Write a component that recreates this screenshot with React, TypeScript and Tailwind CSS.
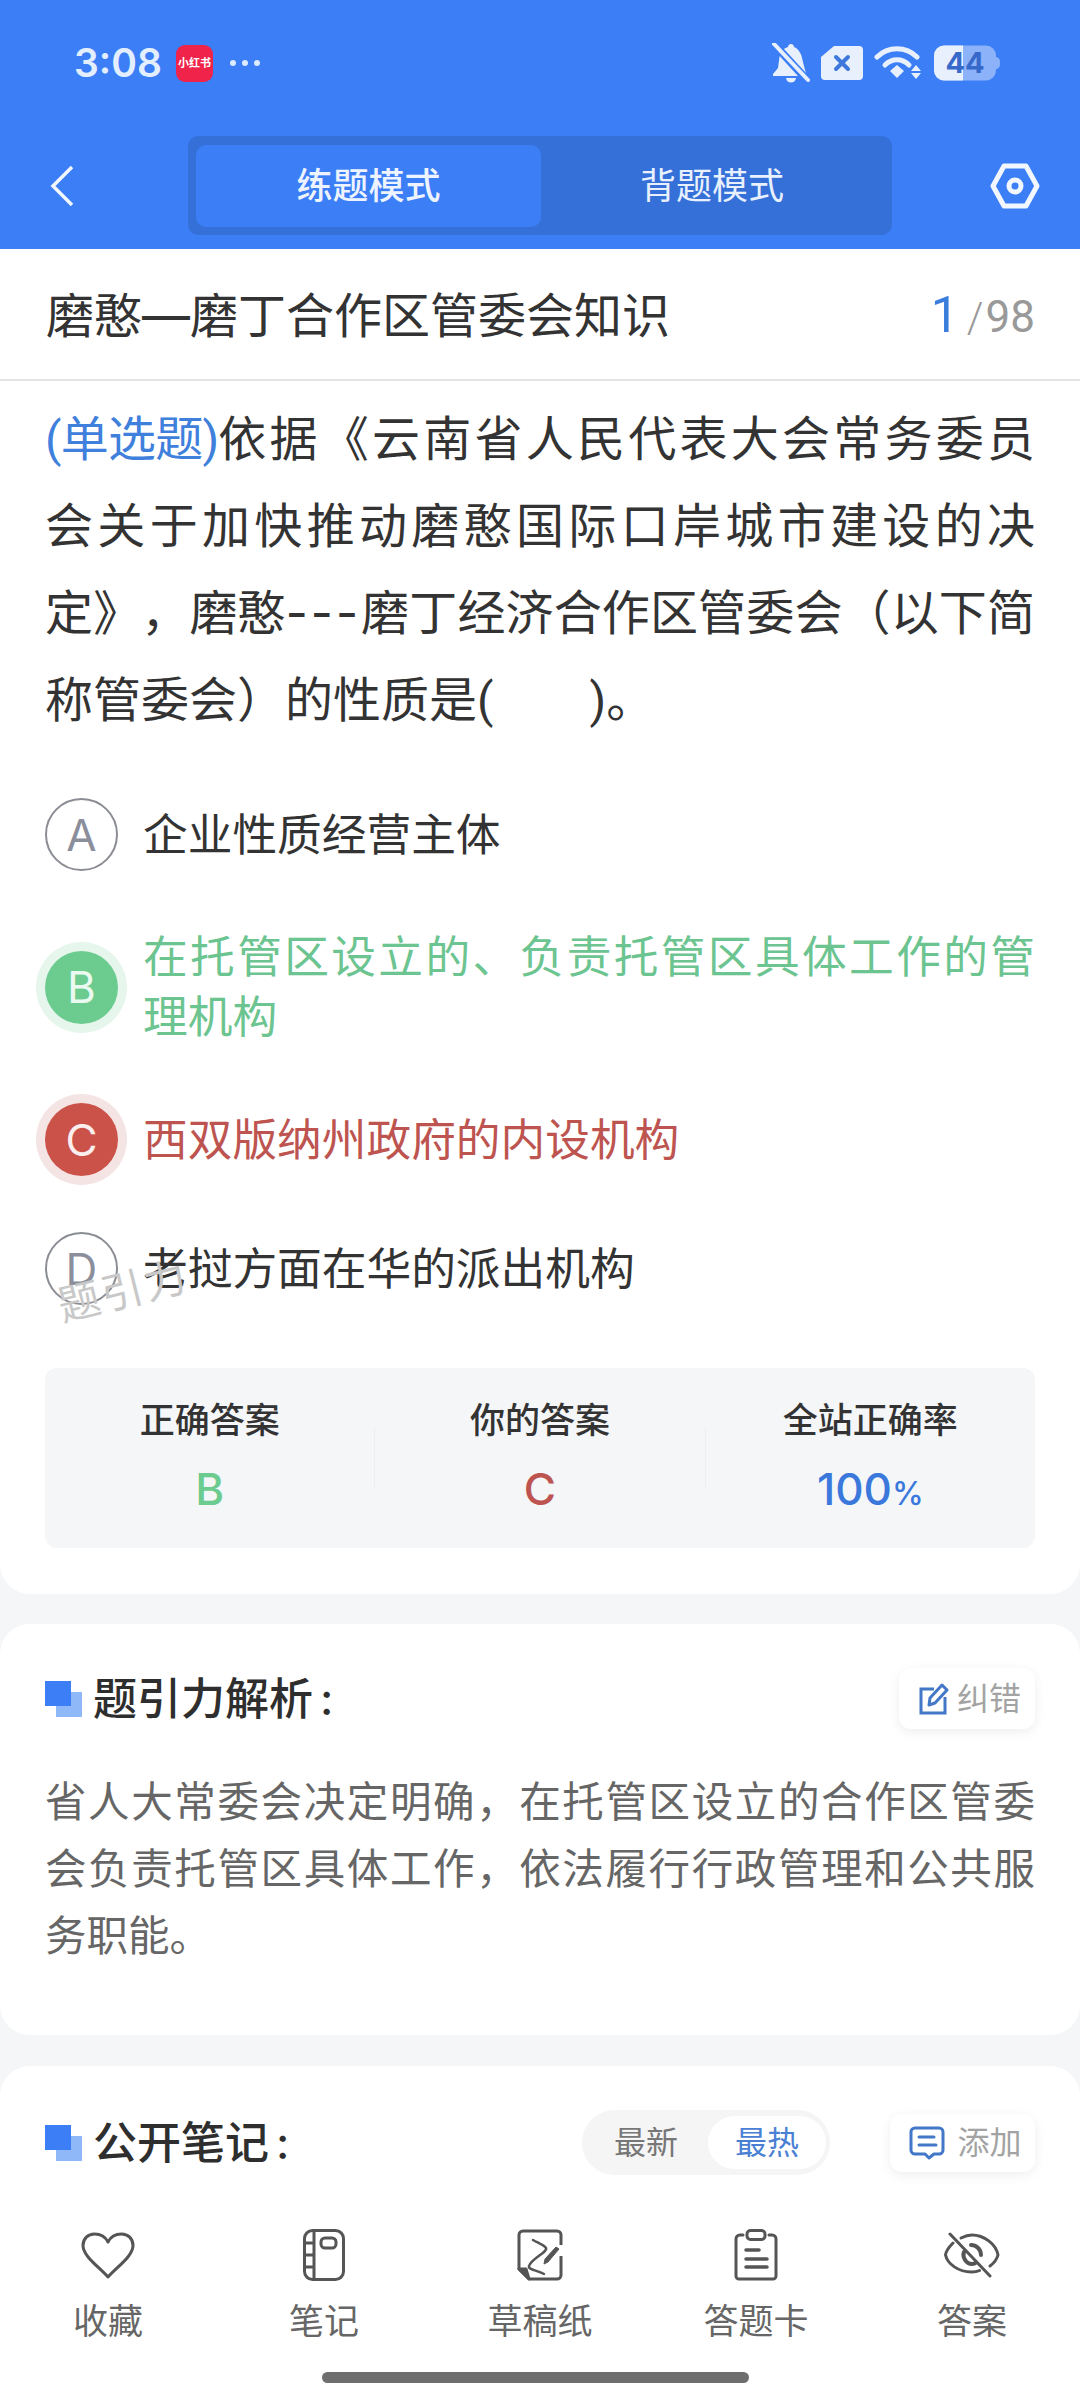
import type { ReactNode } from 'react';

const BellOff = () => (
  <svg width="38" height="40" viewBox="0 0 38 40" fill="#e8f0fe">
    <path d="M19 1c-2 0-3 1.500-3 3-5 1.500-8 5-8.500 10L6 25l-5 6v2h34l-2-6-3-12c-1-6-5-10-8-11 0-1.500-1-3-3-3z" />
    <path d="M14 35h10c-.5 3-2.500 4.500-5 4.500S14.500 38 14 35z" />
    <path d="M1 0l35 38" stroke="#3b7ef6" strokeWidth="8" />
    <path d="M2 1l34 36" stroke="#e8f0fe" strokeWidth="4" strokeLinecap="round" />
  </svg>
);

const SimOff = () => (
  <svg width="44" height="36" viewBox="0 0 44 36">
    <path d="M14 1h25a4 4 0 0 1 4 4v26a4 4 0 0 1-4 4H5a4 4 0 0 1-4-4V12z" fill="#e8f0fe" />
    <path d="M16 12l12 12M28 12L16 24" stroke="#3f78dc" strokeWidth="4" strokeLinecap="round" />
  </svg>
);

const Wifi = () => (
  <svg width="50" height="36" viewBox="0 0 50 36" fill="none" stroke="#e8f0fe" strokeLinecap="round">
    <path d="M3 12C14 1 32 1 43 12" strokeWidth="5" />
    <path d="M11 20c7-7 17-7 24 0" strokeWidth="5" />
    <path d="M16 26l7-6 7 6-7 7z" fill="#e8f0fe" stroke="none" />
    <path d="M42 20l5 6H37zM37 28h10l-5 6z" fill="#e8f0fe" stroke="none" />
  </svg>
);

const Battery = () => (
  <svg width="66" height="36" viewBox="0 0 66 36">
    <rect x="0" y="0.500" width="62" height="35" rx="10" fill="#8cb2f9" />
    <path d="M10 .5h19v35H10A10 10 0 0 1 0 25.500v-15A10 10 0 0 1 10 .5z" fill="#e8f0fe" />
    <path d="M62 12c3 .5 4 2 4 6s-1 5.500-4 6z" fill="#8cb2f9" />
    <text x="31" y="28" textAnchor="middle" fontSize="29" fontWeight="700" fontFamily="Inter" fill="#3669c9">44</text>
  </svg>
);

const Heart = () => (
  <svg width="54" height="47" viewBox="0 0 54 47" fill="none" stroke="#555" strokeWidth="3" strokeLinejoin="round">
    <path d="M27 45C17 34 2 24 2 13.500 2 6.500 7 2 13.500 2 19.500 2 24.500 5 27 10 29.500 5 34.500 2 40.500 2 47 2 52 6.500 52 13.500 52 24 37 34 27 45z" />
  </svg>
);

const Notebook = () => (
  <svg width="42" height="52" viewBox="0 0 42 52" fill="none" stroke="#555" strokeWidth="3">
    <rect x="1.500" y="1.500" width="39" height="49" rx="8" />
    <path d="M11 2v48M2 14h9M2 26h9M2 38h9" />
    <rect x="18" y="9" width="15" height="10" rx="4" />
  </svg>
);

const Draft = () => (
  <svg width="46" height="52" viewBox="0 0 46 52" fill="none" stroke="#555" strokeWidth="3" strokeLinejoin="round">
    <path d="M44 16V6a4 4 0 0 0-4-4H6a4 4 0 0 0-4 4v34l10 10h28a4 4 0 0 0 4-4V27" />
    <path d="M2 40h7l3 10z" fill="#555" />
    <path d="M16 11c5 3 11 5 13 8 2 4-15 11-17 18-1 4 8 4 15 8" strokeWidth="2.500" strokeLinecap="round" />
    <path d="M42 20L31 33l-4 2 1-5 11-12z" fill="#555" strokeWidth="1" />
  </svg>
);

const Clipboard = () => (
  <svg width="44" height="52" viewBox="0 0 44 52" fill="none" stroke="#555" strokeWidth="3" strokeLinecap="round">
    <path d="M9 6H6a4 4 0 0 0-4 4v37a3 3 0 0 0 3 3h34a3 3 0 0 0 3-3V10a4 4 0 0 0-4-4h-3" />
    <rect x="13" y="1.500" width="18" height="9" rx="3.500" />
    <path d="M12 21h13M12 30h21M12 38h21" strokeWidth="3.500" />
  </svg>
);

const EyeOff = () => (
  <svg width="56" height="46" viewBox="0 0 56 46" fill="none" stroke="#555" strokeWidth="3" strokeLinecap="round">
    <path d="M6 2l40 42" />
    <path d="M9 11C5 15 2 19 1.500 23c2 9 13 17 26 17 3 0 6-.5 8-1.500" />
    <path d="M17 6c3-1.500 7-3 11-3 12 0 24 9 26 20-1 4-4 8-8 11" />
    <path d="M20 20c-2 5 2 12 8 12 2 0 3-.5 4-1.500" strokeWidth="4" />
    <path d="M27 13c5 0 10 4 10 10" strokeWidth="4" />
  </svg>
);

const Edit = () => (
  <svg width="30" height="32" viewBox="0 0 30 32" fill="none" stroke="#4378c8" strokeWidth="3">
    <path d="M15 6H2v24h24V14" />
    <path d="M10 22l1-7L23 2l5 5-12 13z" strokeLinejoin="round" />
  </svg>
);

const Comment = () => (
  <svg width="36" height="34" viewBox="0 0 36 34" fill="none" stroke="#4378c8" strokeWidth="3" strokeLinejoin="round">
    <path d="M6 2h24a4 4 0 0 1 4 4v18a4 4 0 0 1-4 4h-5l-5 4-4-4H6a4 4 0 0 1-4-4V6a4 4 0 0 1 4-4z" />
    <path d="M10 11h15M10 19h17" strokeLinecap="round" />
  </svg>
);

// two overlapping squares in front of the section headings
const HeadingMark = () => (
  <div className="relative h-9 w-[37px] shrink-0">
    <div className="absolute bottom-0 right-0 h-[25px] w-[26px] bg-[#8fb8f8]" />
    <div className="absolute left-0 top-0 h-[25px] w-[26px] bg-[#3b7ef6]" />
  </div>
);

function Option({ letter, tone, children, mark }: { letter: string; tone?: 'right' | 'wrong'; children: ReactNode; mark?: ReactNode }) {
  const circle =
    tone === 'right'
      ? 'bg-[#6ccb8f] text-[#eafaf0] ring-[9px] ring-[#e6f6ec]'
      : tone === 'wrong'
        ? 'bg-[#cb5249] text-[#fbeeee] ring-[9px] ring-[#f5e4e4]'
        : 'border-2 border-[#8b8d94] text-[#8b8e9b]';
  const text = tone === 'right' ? 'text-[#6cc490]' : tone === 'wrong' ? 'text-[#bd5450]' : 'text-[#333]';
  return (
    <div className="relative flex items-center">
      <div className={`flex h-[73px] w-[73px] shrink-0 items-center justify-center rounded-full text-[44px] leading-none ${circle}`}>{letter}</div>
      <div className={`ml-[25px] flex-1 text-justify text-[44.700px] leading-[60px] ${text}`}>{children}</div>
      {mark}
    </div>
  );
}

function Stat({ label, children }: { label: string; children: ReactNode }) {
  return (
    <div className="flex flex-1 flex-col items-center">
      <div className="text-[35px] font-medium leading-[50px] text-[#333]">{label}</div>
      <div className="mt-[19px] h-[50px] text-[44px] font-medium leading-[50px]">{children}</div>
    </div>
  );
}

const tabs = [
  { label: '收藏', icon: <Heart /> },
  { label: '笔记', icon: <Notebook /> },
  { label: '草稿纸', icon: <Draft /> },
  { label: '答题卡', icon: <Clipboard /> },
  { label: '答案', icon: <EyeOff /> },
];

export default function App() {
  return (
    <div className="relative h-[2400px] w-[1080px] overflow-hidden bg-[#f4f6f8] font-['Inter','Noto_Sans_CJK_SC',sans-serif] [text-spacing-trim:space-all]">
      {/* Blue header */}
      <header className="bg-[#3b7ef6]">
        <div className="flex h-[124px] items-center justify-between pl-[74px] pr-[80px] pt-[2px]">
          <div className="flex items-center">
            <span className="w-[102px] text-[39px] font-semibold text-[#e3eefe]">3:08</span>
            <span className="flex h-[37px] w-[37px] items-center justify-center rounded-[9px] bg-[#f0234a] text-[11px] font-bold text-white">小红书</span>
            <span className="ml-[17px] flex gap-[6px]">
              <i className="h-[6px] w-[6px] rounded-full bg-[#dcebff]" />
              <i className="h-[6px] w-[6px] rounded-full bg-[#dcebff]" />
              <i className="h-[6px] w-[6px] rounded-full bg-[#dcebff]" />
            </span>
          </div>
          <div className="flex items-center gap-[10px]">
            <BellOff />
            <SimOff />
            <Wifi />
            <Battery />
          </div>
        </div>
        <div className="flex h-[125px] items-start justify-between px-[40px] pt-[12px]">
          <div className="flex h-[99px] w-[60px] items-center pl-[10px]">
            <svg width="24" height="42" viewBox="0 0 24 42" fill="none" stroke="#f2f7ff" strokeWidth="3.500">
              <path d="M22 2L3 21l19 19" />
            </svg>
          </div>
          <div className="ml-[88px] flex h-[99px] w-[704px] rounded-[10px] bg-[#3570d8] pl-[8px] pt-[9px]">
            <div className="flex h-[82px] w-[345px] items-center justify-center rounded-[10px] bg-[#3b7ef6] text-[36px] font-medium text-[#eef4ff]">练题模式</div>
            <div className="flex h-[82px] flex-1 items-center justify-center pr-[9px] text-[36px] text-[#e8f0fe]">背题模式</div>
          </div>
          <div className="flex h-[99px] flex-1 items-center justify-end">
            <svg width="50" height="46" viewBox="0 0 50 46" fill="none" stroke="#f2f7ff" strokeWidth="5" strokeLinejoin="round">
              <path d="M14 3h22l11 20-11 20H14L3 23z" />
              <circle cx="25" cy="23" r="6" />
            </svg>
          </div>
        </div>
      </header>

      {/* Question card */}
      <section className="rounded-b-[30px] bg-white pb-[46px]">
        <div className="flex h-[132px] items-center justify-between border-b-2 border-[#e4e4e4] pl-[46px] pr-[45px] pt-[3px]">
          <h1 className="text-[48px] text-[#333]">磨憨—磨丁合作区管委会知识</h1>
          <div className="flex items-baseline font-['Roboto','Noto_Sans_CJK_SC',sans-serif] text-[#999]">
            <span className="text-[50px] text-[#3b7ddd]">1</span>
            <span className="ml-[8px] text-[42px] font-light">/</span>
            <span className="ml-[2px] text-[44px]">98</span>
          </div>
        </div>
        <div className="px-[45px] pt-[16px]">
          <p className="text-justify font-['Roboto','Noto_Sans_CJK_SC',sans-serif] text-[48px] leading-[86.500px] text-[#333]">
            <span className="block [text-align-last:justify]"><span className="tracking-[-4px] text-[#3f80dc]">(单选题)</span>依据《云南省人民代表大会常务委员</span>
            会关于加快推动磨憨国际口岸城市建设的决定》，磨憨<span className="font-['Inter'] tracking-[3px]">---</span>磨丁经济合作区管委会（以下简称管委会）的性质是(　　)。
          </p>
          <div className="mt-[54px] flex flex-col gap-[56px]">
            <Option letter="A">企业性质经营主体</Option>
            <Option letter="B" tone="right">在托管区设立的、负责托管区具体工作的管理机构</Option>
            <Option letter="C" tone="wrong">西双版纳州政府的内设机构</Option>
            <Option
              letter="D"
              mark={<span className="absolute left-[12px] top-[38px] -rotate-[14deg] text-[42px] leading-none tracking-[2px] text-[#c8c8c8]">题引力</span>}
            >
              老挝方面在华的派出机构
            </Option>
          </div>
          <div className="mt-[63px] flex h-[180px] items-start rounded-[12px] bg-[#f4f6f8] pt-[27px]">
            <Stat label="正确答案"><span className="text-[#6ccb8f]">B</span></Stat>
            <div className="mt-[32px] h-[60px] w-px bg-[#eceef0]" />
            <Stat label="你的答案"><span className="text-[#bd5450]">C</span></Stat>
            <div className="mt-[32px] h-[60px] w-px bg-[#eceef0]" />
            <Stat label="全站正确率">
              <span className="text-[#3b78dc]">100<span className="text-[32px]">%</span></span>
            </Stat>
          </div>
        </div>
      </section>

      {/* Analysis card */}
      <section className="mt-[30px] h-[411px] rounded-[30px] bg-white px-[45px] pt-[44px]">
        <div className="flex h-[61px] items-center">
          <HeadingMark />
          <h2 className="ml-[11px] text-[44px] font-medium text-[#2e2e2e]">题引力解析<span className="ml-[7px]">:</span></h2>
          <div className="ml-auto flex h-[61px] w-[136px] items-center justify-center gap-[8px] rounded-[12px] bg-white pl-[6px] shadow-[0_3px_12px_rgba(0,0,0,0.07)]">
            <Edit />
            <span className="text-[32px] text-[#a3a3a3]">纠错</span>
          </div>
        </div>
        <p className="mt-[40px] text-justify text-[41.500px] leading-[67px] text-[#666]">
          省人大常委会决定明确，在托管区设立的合作区管委会负责托管区具体工作，依法履行行政管理和公共服务职能。
        </p>
      </section>

      {/* Public notes card */}
      <section className="mt-[31px] h-[400px] rounded-[30px] bg-white px-[45px] pt-[44px]">
        <div className="flex h-[65px] items-center">
          <HeadingMark />
          <h2 className="ml-[11px] text-[44px] font-medium text-[#2e2e2e]">公开笔记<span className="ml-[7px]">:</span></h2>
          <div className="ml-auto flex h-[65px] w-[248px] items-center rounded-full bg-[#f5f5f5] pl-[32px] pr-[4px]">
            <span className="text-[32px] text-[#777]">最新</span>
            <span className="ml-auto flex h-[53px] w-[118px] items-center justify-center rounded-full bg-white text-[32px] text-[#4a80d4]">最热</span>
          </div>
          <div className="ml-[60px] flex h-[58px] w-[145px] shrink-0 items-center justify-center gap-[12px] rounded-[12px] bg-white pl-[6px] shadow-[0_3px_12px_rgba(0,0,0,0.07)]">
            <Comment />
            <span className="text-[32px] text-[#a3a3a3]">添加</span>
          </div>
        </div>
      </section>

      {/* Bottom tab bar sits over the scrolling content */}
      <nav className="absolute inset-x-0 bottom-0 h-[190px] bg-white">
        <div className="flex pt-[18px]">
          {tabs.map((t) => (
            <div key={t.label} className="flex w-[216px] flex-col items-center">
              <div className="flex h-[54px] items-center">{t.icon}</div>
              <div className="mt-[14px] text-[35px] leading-[50px] text-[#666]">{t.label}</div>
            </div>
          ))}
        </div>
        <div className="absolute bottom-[17px] left-[322px] h-[11px] w-[427px] rounded-full bg-[#6e6e6e]" />
      </nav>
    </div>
  );
}
